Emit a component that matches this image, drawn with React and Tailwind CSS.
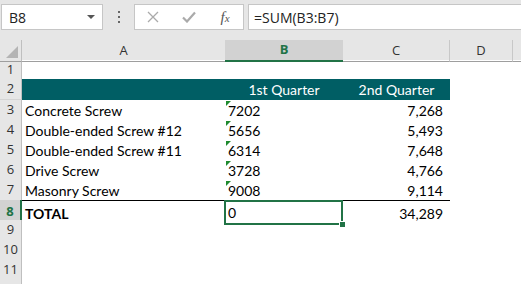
const rows = [
  { n: 1, h: "h-[19px]" },
  { n: 2, h: "h-[21px]", head: true },
  { n: 3, h: "h-[20px]", a: "Concrete Screw", b: "7202", c: "7,268" },
  { n: 4, h: "h-[20px]", a: "Double-ended Screw #12", b: "5656", c: "5,493" },
  { n: 5, h: "h-[20px]", a: "Double-ended Screw #11", b: "6314", c: "7,648" },
  { n: 6, h: "h-[20px]", a: "Drive Screw", b: "3728", c: "4,766" },
  { n: 7, h: "h-[20px]", a: "Masonry Screw", b: "9008", c: "9,114" },
  { n: 8, h: "h-[20px]", total: true },
  { n: 9, h: "h-[20px]" },
  { n: 10, h: "h-[20px]" },
  { n: 11, h: "h-[20px]" },
  { n: 12, h: "h-[20px]", hidden: true },
];

const cols = "grid grid-cols-[22px_203px_118px_107px_63px_8px]";
const cellFont = { fontFamily: "Lato, 'Open Sans', sans-serif" };

function Corner() {
  return <span className="absolute left-[1px] top-[1px] w-0 h-0 border-t-[5px] border-r-[5px] border-t-[#1e8a2e] border-r-transparent" />;
}

function Toolbar() {
  return (
    <div className="h-[40px] bg-[#e6e6e6] flex items-start pt-[4px] pl-[1px]">
      <div className="w-[102px] h-[26px] bg-white border border-[#c6c6c6] flex items-center justify-between pl-[7px] pr-[7px]">
        <span className="text-[14px] text-[#222]" style={{ fontFamily: "'Open Sans', sans-serif" }}>B8</span>
        <span className="w-0 h-0 border-l-[4px] border-r-[4px] border-t-[4px] border-l-transparent border-r-transparent border-t-[#555]" />
      </div>
      <div className="w-[31px] h-[26px] flex flex-col items-center justify-center gap-[3px]">
        <span className="w-[2px] h-[2px] bg-[#666]" />
        <span className="w-[2px] h-[2px] bg-[#666]" />
        <span className="w-[2px] h-[2px] bg-[#666]" />
      </div>
      <div className="w-[110px] h-[26px] bg-white border border-[#c6c6c6] flex items-center">
        <div className="w-[36px] flex justify-center">
          <svg width="12" height="12" viewBox="0 0 12 12"><path d="M1 1L11 11M11 1L1 11" stroke="#aaa" strokeWidth="1.3" /></svg>
        </div>
        <div className="w-[36px] flex justify-center">
          <svg width="14" height="12" viewBox="0 0 14 12"><path d="M1 6.5L5 10.5L13 1.5" stroke="#aaa" strokeWidth="2.2" fill="none" /></svg>
        </div>
        <div className="w-[36px] flex justify-center">
          <span className="text-[15px] italic text-[#555] leading-none" style={{ fontFamily: "'Liberation Serif', serif" }}>f<span className="text-[11px]">x</span></span>
        </div>
      </div>
      <div className="ml-[4px] flex-1 h-[26px] bg-white border border-[#c6c6c6] border-r-0 flex items-center pl-[5px]">
        <span className="text-[14px] text-[#222]" style={{ fontFamily: "'Open Sans', sans-serif" }}>=SUM(B3:B7)</span>
      </div>
    </div>
  );
}

function ColHeader() {
  const hf = { fontFamily: "'Open Sans', sans-serif" };
  return (
    <div className={`${cols} h-[20px] bg-[#e6e6e6] text-[13px] text-[#333]`} style={hf}>
      <div className="relative border-r border-[#bfbfbf] border-b border-b-[#9e9e9e]">
        <span className="absolute right-[3px] bottom-[3px] w-0 h-0 border-l-[12px] border-b-[12px] border-l-transparent border-b-[#b4b4b4]" />
      </div>
      <div className="flex items-center justify-center border-b border-[#9e9e9e]">A</div>
      <div className="flex items-center justify-center bg-[#d2d2d2] border-b-2 border-[#217346] text-[#217346] font-bold">B</div>
      <div className="flex items-center justify-center border-b border-[#9e9e9e] border-r border-r-[#c8c8c8]">C</div>
      <div className="flex items-center justify-center border-b border-[#9e9e9e] border-r border-r-[#c8c8c8]">D</div>
      <div className="border-b border-[#9e9e9e]" />
    </div>
  );
}

export default function App() {
  return (
    <div className="w-[521px] h-[284px] overflow-hidden bg-white">
      <Toolbar />
      <ColHeader />
      {rows.map((r) => (
        <div key={r.n} className={`${cols} ${r.h}`}>
          <div
            className={`flex items-center justify-center text-[13px] border-b border-[#d4d4d4] ${
              r.total ? "bg-[#d2d2d2] text-[#217346] font-bold border-r-2 border-r-[#217346]" : "bg-[#e6e6e6] text-[#333] border-r border-r-[#bfbfbf]"
            }`}
            style={{ fontFamily: "'Open Sans', sans-serif" }}
          >
            {r.hidden ? "" : r.n}
          </div>
          {r.head ? (
            <>
              <div className="bg-[#005e64]" />
              <div className="bg-[#005e64] text-white text-[14px] flex items-center justify-center" style={cellFont}>1st Quarter</div>
              <div className="bg-[#005e64] text-white text-[14px] flex items-center justify-center" style={cellFont}>2nd Quarter</div>
              <div />
              <div />
            </>
          ) : r.total ? (
            <>
              <div className="border-t border-black flex items-center pl-[3px] text-[14px] font-bold text-black" style={cellFont}>TOTAL</div>
              <div className="relative border-2 border-[#217346] -ml-[1px] flex items-center pl-[2px] text-[14px] text-black" style={cellFont}>
                0
                <span className="absolute -right-[5px] -bottom-[5px] w-[7px] h-[7px] bg-[#217346] border border-white" />
              </div>
              <div className="border-t border-black flex items-center justify-end pr-[7px] text-[14px] text-black" style={cellFont}>34,289</div>
              <div />
              <div />
            </>
          ) : r.a ? (
            <>
              <div className="flex items-center pl-[3px] text-[14px] text-black" style={cellFont}>{r.a}</div>
              <div className="relative flex items-center pl-[3px] text-[14px] text-black" style={cellFont}>
                <Corner />
                {r.b}
              </div>
              <div className="flex items-center justify-end pr-[7px] text-[14px] text-black" style={cellFont}>{r.c}</div>
              <div />
              <div />
            </>
          ) : (
            <>
              <div />
              <div />
              <div />
              <div />
              <div />
            </>
          )}
        </div>
      ))}
    </div>
  );
}
